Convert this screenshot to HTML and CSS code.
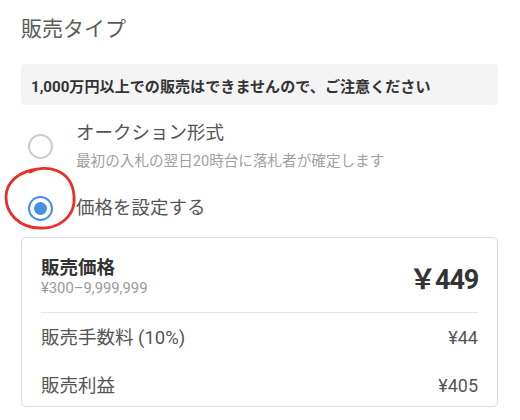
FILE: index.html
```html
<!DOCTYPE html>
<html lang="ja">
<head>
<meta charset="utf-8">
<link rel="stylesheet" href="styles.css">
</head>
<body>
<h1 class="title">販売タイプ</h1>
<div class="notice">1,000万円以上での販売はできませんので、ご注意ください</div>
<div class="option first">
  <span class="radio"></span>
  <div class="opt-text">
    <div class="opt-label">オークション形式</div>
    <div class="opt-sub">最初の入札の翌日20時台に落札者が確定します</div>
  </div>
</div>
<div class="option second">
  <span class="radio checked"><span class="dot"></span></span>
  <div class="opt-text">
    <div class="opt-label">価格を設定する</div>
  </div>
  <svg class="mark" width="90" height="70" viewBox="0 165 90 70" fill="none">
    <path d="M30 172 C 44 164, 72 168, 74 196 C 76 217, 58 229, 40 228 C 20 228, 6 214, 6 197 C 6 182, 19 171, 38 169" stroke="#e8302a" stroke-width="2.8" stroke-linecap="round"/>
  </svg>
</div>
<div class="card">
  <div class="price-row">
    <div>
      <div class="price-label">販売価格</div>
      <div class="price-range">¥300–9,999,999</div>
    </div>
    <div class="price-value">￥449</div>
  </div>
  <div class="row fee">
    <span>販売手数料 (10%)</span><span class="val">¥44</span>
  </div>
  <div class="row profit">
    <span>販売利益</span><span class="val">¥405</span>
  </div>
</div>
</body>
</html>
```
FILE: styles.css
```css
* { box-sizing: border-box; }
html, body { margin: 0; background: #fff; }
body {
  width: 520px;
  padding: 14px 22px 0 21px;
  font-family: Roboto, "Noto Sans CJK JP", sans-serif;
  color: #555;
}
.title {
  margin: 0;
  font-size: 21px;
  line-height: 30px;
  font-weight: 400;
  color: #5c5c5c;
}
.notice {
  margin-top: 20px;
  height: 41px;
  display: flex;
  align-items: center;
  padding: 0 10px;
  background: #f4f4f4;
  border-radius: 4px;
  font-size: 15.1px;
  font-weight: 700;
  color: #333;
}
.option {
  display: flex;
  align-items: center;
  gap: 23px;
  position: relative;
}
.option.first { margin-top: 15px; }
.option.second { margin-top: 23px; }
.radio {
  margin-left: 7px;
  width: 25px;
  height: 25px;
  border-radius: 50%;
  border: 2px solid #cbcbcb;
  flex: none;
  display: flex;
  align-items: center;
  justify-content: center;
}
.radio.checked { border: 2.5px solid #4a90e2; }
.dot {
  width: 13px;
  height: 13px;
  border-radius: 50%;
  background: #4a90e2;
}
.opt-label {
  font-size: 18.5px;
  line-height: 26px;
  color: #555;
}
.opt-sub {
  font-size: 14.6px;
  line-height: 22px;
  color: #a0a0a0;
  margin-top: 4px;
}
.mark {
  position: absolute;
  left: -21px;
  top: -30px;
}
.card {
  margin-top: 16px;
  border: 1px solid #dcdcdc;
  border-radius: 5px;
  padding: 0 19px 8px;
}
.price-row {
  display: flex;
  justify-content: space-between;
  align-items: center;
  padding: 19px 0 15px;
  border-bottom: 1px solid #e6e6e6;
}
.price-label {
  font-size: 18.5px;
  line-height: 22px;
  font-weight: 700;
  color: #333;
}
.price-range {
  font-size: 14.8px;
  line-height: 18px;
  color: #9a9a9a;
}
.price-value {
  font-size: 27px;
  font-weight: 700;
  color: #333;
  letter-spacing: -1.2px;
}
.row {
  display: flex;
  justify-content: space-between;
  align-items: center;
  font-size: 18.5px;
  line-height: 24px;
  color: #555;
}
.row.fee { padding-top: 13px; }
.row.profit { padding-top: 24px; }
.val { font-size: 18px; }
```
